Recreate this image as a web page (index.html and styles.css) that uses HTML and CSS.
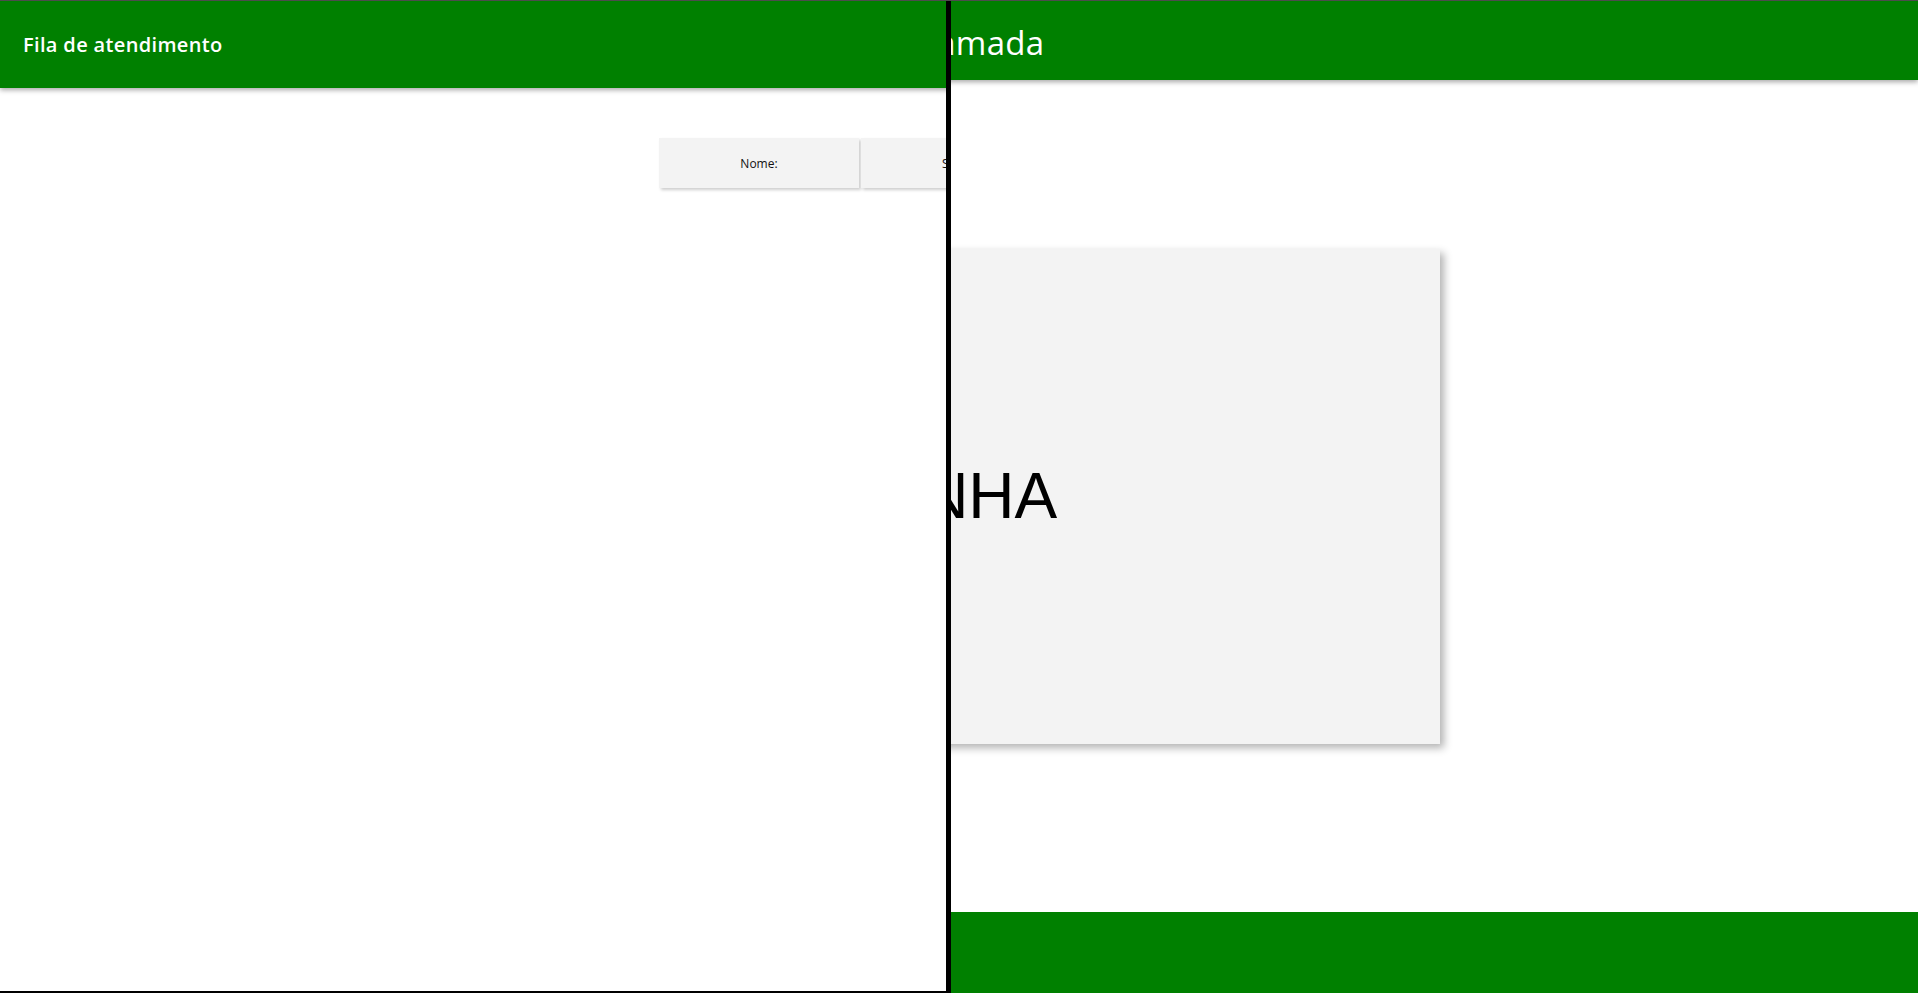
FILE: index.html
```html
<!DOCTYPE html>
<html lang="pt-BR">
<head>
<meta charset="utf-8">
<title>Fila de atendimento / Chamada</title>
<link rel="stylesheet" href="styles.css">
</head>
<body>
<div class="frame">
  <section class="pane pane-left">
    <div class="page">
      <header class="bar bar-left">
        <h1 class="title-left">Fila de atendimento</h1>
      </header>
      <div class="queue">
        <div class="cell">Nome:</div>
        <div class="cell">Senha:</div>
        <div class="cell">Guichê:</div>
      </div>
    </div>
  </section>
  <div class="divider"></div>
  <section class="pane pane-right">
    <div class="page page-right">
      <header class="bar bar-right">
        <h1 class="title-right">Chamada</h1>
      </header>
      <main class="stage">
        <div class="card">
          <span class="card-text">SENHA</span>
        </div>
      </main>
      <footer class="foot"></footer>
    </div>
  </section>
</div>
</body>
</html>
```

FILE: styles.css
```css
html, body {
  margin: 0;
  padding: 0;
  height: 993px;
  overflow: hidden;
  background: #ffffff;
}

.frame {
  display: flex;
  height: 993px;
  box-sizing: border-box;
  border-top: 1px solid #4d4d4d;
}

.pane {
  overflow: hidden;
  height: 100%;
  box-sizing: border-box;
}

.pane-left {
  width: 946px;
  flex: none;
  border-bottom: 2px solid #000000;
}

.divider {
  width: 5px;
  flex: none;
  background: #000000;
}

.pane-right {
  flex: 1;
}

.page {
  width: 1918px;
  height: 100%;
  display: flex;
  flex-direction: column;
  background: #ffffff;
  font-family: "Open Sans", "Noto Sans", sans-serif;
}

.page-right {
  margin-left: -951px;
}

.bar {
  flex: none;
  background: #008000;
  display: flex;
  align-items: center;
  position: relative;
  z-index: 1;
}

.bar-left {
  height: 87px;
  padding-left: 23px;
  box-shadow: 0 2px 5px rgba(0, 0, 0, 0.35);
}

.title-left {
  margin: 0;
  color: #ffffff;
  font-size: 20px;
  font-weight: 600;
  letter-spacing: 0.35px;
}

.bar-right {
  height: 79px;
  justify-content: center;
  padding-left: 22px;
  box-shadow: 0 2px 5px rgba(0, 0, 0, 0.35);
}

.title-right {
  margin: 0;
  color: #ffffff;
  font-size: 33px;
  font-weight: 500;
  line-height: 1;
  padding-top: 4px;
  letter-spacing: 0.3px;
}

.queue {
  margin-top: 50px;
  display: flex;
  justify-content: center;
  gap: 2px;
  padding-left: 4px;
}

.cell {
  width: 200px;
  height: 50px;
  display: flex;
  align-items: center;
  justify-content: center;
  background: #f3f3f3;
  font-size: 12px;
  color: #111111;
  box-shadow: 2px 2px 3px rgba(0, 0, 0, 0.2);
}

.stage {
  flex: 1;
  display: flex;
  align-items: center;
  justify-content: center;
}

.card {
  width: 962px;
  height: 495px;
  background: #f3f3f3;
  box-shadow: 4px 4px 8px rgba(0, 0, 0, 0.3);
  display: flex;
  align-items: center;
  justify-content: center;
  box-sizing: border-box;
  padding-right: 24px;
}

.card-text {
  font-family: "Liberation Sans", Arial, sans-serif;
  font-size: 64px;
  color: #000000;
}

.foot {
  flex: none;
  height: 81px;
  background: #008000;
}
```
